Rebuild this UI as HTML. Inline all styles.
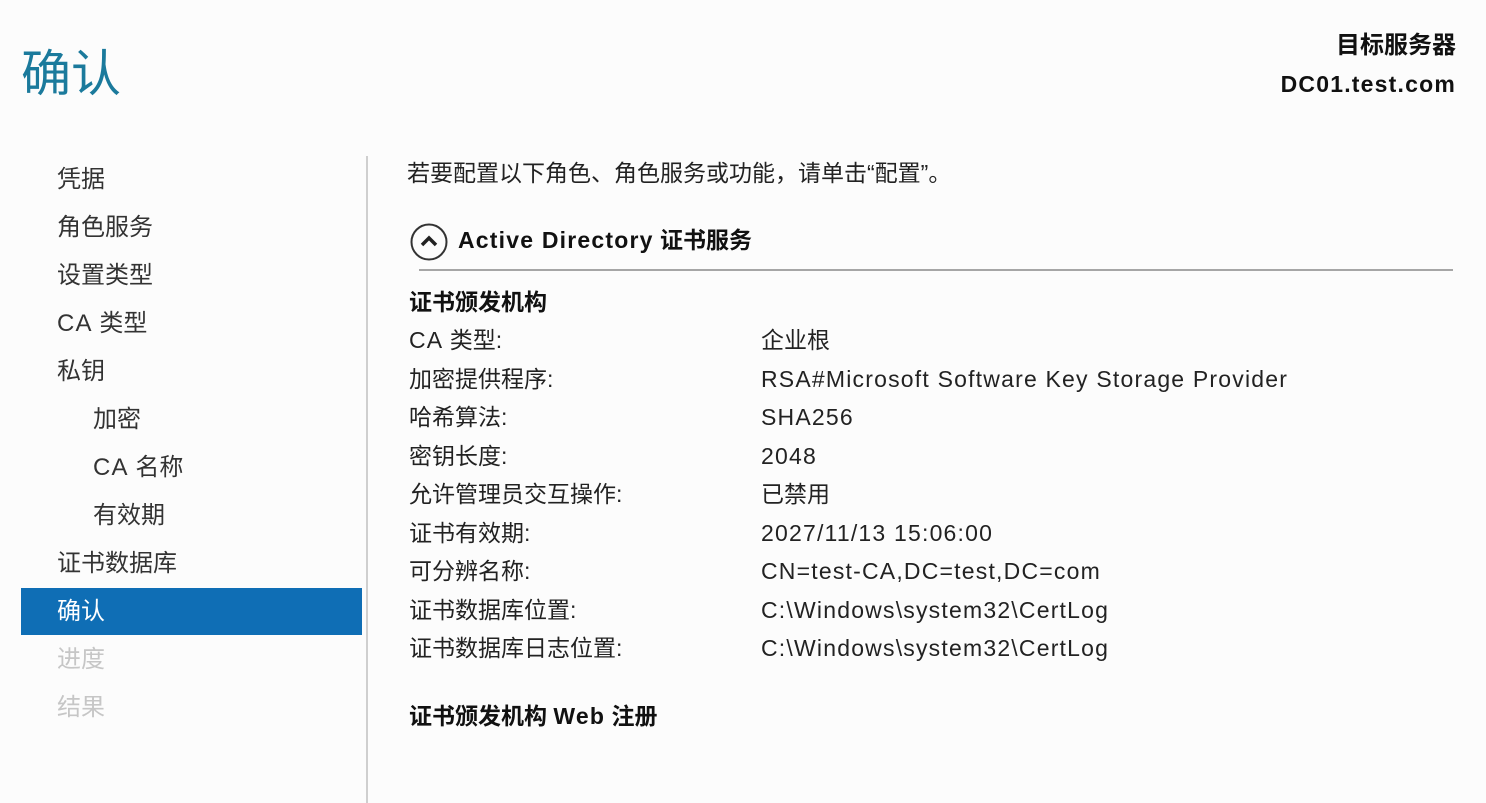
<!DOCTYPE html>
<html><head><meta charset="utf-8"><style>
body{margin:0;width:1486px;height:803px;background:#fcfcfc;font-family:"Liberation Sans","Noto Sans CJK SC",sans-serif;color:#1e1e1e;position:relative;overflow:hidden}
.a{position:absolute;white-space:nowrap;line-height:1}
.t{left:21px;top:49px;font-size:50px;color:#1b7a9c}
.srv{right:30px;font-size:23px;font-weight:bold;color:#111}
.nav{left:57px;font-size:24px;color:#333}
.sub{left:93px}
.dis{color:#c6c6c6}
.sel{left:21px;top:588px;width:341px;height:47px;background:#0f6eb5}
.sep{left:366px;top:156px;width:2px;height:647px;background:#cfcfcf}
.r{font-size:23px;color:#222}
.b{font-weight:bold;color:#111}
.l{letter-spacing:1.2px}
</style></head><body>
<div class="a t">确认</div>
<div class="a srv" style="top:34px;font-size:24px">目标服务器</div>
<div class="a srv l" style="top:73px">DC01.test.com</div>
<div class="a sel"></div>
<div class="a nav" style="top:168px">凭据</div>
<div class="a nav" style="top:216px">角色服务</div>
<div class="a nav" style="top:264px">设置类型</div>
<div class="a nav" style="top:312px"><span class="l">CA</span> 类型</div>
<div class="a nav" style="top:360px">私钥</div>
<div class="a nav sub" style="top:408px">加密</div>
<div class="a nav sub" style="top:456px"><span class="l">CA</span> 名称</div>
<div class="a nav sub" style="top:504px">有效期</div>
<div class="a nav" style="top:552px">证书数据库</div>
<div class="a nav" style="top:600px;color:#fff">确认</div>
<div class="a nav dis" style="top:648px">进度</div>
<div class="a nav dis" style="top:696px">结果</div>
<div class="a sep"></div>
<div class="a r" style="left:407px;top:162px">若要配置以下角色、角色服务或功能，请单击“配置”。</div>
<svg class="a" style="left:410px;top:223px" width="38" height="38" viewBox="0 0 38 38"><circle cx="19" cy="19" r="17.5" fill="none" stroke="#333" stroke-width="2"/><path d="M12 22 L19 15 L26 22" fill="none" stroke="#222" stroke-width="3.5"/></svg>
<div class="a r b" style="left:458px;top:229px"><span class="l">Active Directory</span> 证书服务</div>
<div class="a" style="left:419px;top:269px;width:1034px;height:2px;background:#a6a6a6"></div>
<div class="a r b" style="left:409px;top:291px">证书颁发机构</div>
<div class="a r" style="left:409px;top:329px"><span class="l">CA</span> 类型:</div><div class="a r" style="left:761px;top:329px">企业根</div>
<div class="a r" style="left:409px;top:368px">加密提供程序:</div><div class="a r l" style="left:761px;top:368px">RSA#Microsoft Software Key Storage Provider</div>
<div class="a r" style="left:409px;top:406px">哈希算法:</div><div class="a r l" style="left:761px;top:406px">SHA256</div>
<div class="a r" style="left:409px;top:445px">密钥长度:</div><div class="a r l" style="left:761px;top:445px">2048</div>
<div class="a r" style="left:409px;top:483px">允许管理员交互操作:</div><div class="a r" style="left:761px;top:483px">已禁用</div>
<div class="a r" style="left:409px;top:522px">证书有效期:</div><div class="a r l" style="left:761px;top:522px">2027/11/13 15:06:00</div>
<div class="a r" style="left:409px;top:560px">可分辨名称:</div><div class="a r l" style="left:761px;top:560px">CN=test-CA,DC=test,DC=com</div>
<div class="a r" style="left:409px;top:599px">证书数据库位置:</div><div class="a r l" style="left:761px;top:599px">C:\Windows\system32\CertLog</div>
<div class="a r" style="left:409px;top:637px">证书数据库日志位置:</div><div class="a r l" style="left:761px;top:637px">C:\Windows\system32\CertLog</div>
<div class="a r b" style="left:409px;top:705px">证书颁发机构 <span class="l">Web</span> 注册</div>
</body></html>
